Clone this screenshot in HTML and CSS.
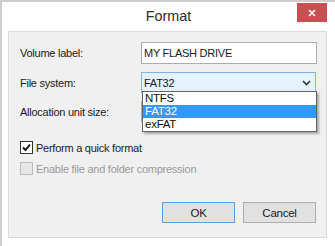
FILE: index.html
```html
<!DOCTYPE html>
<html>
<head>
<meta charset="utf-8">
<link rel="stylesheet" href="styles.css">
</head>
<body>
<div class="window">
  <div class="titlebar">
    <span class="spacer"></span>
    <span class="title">Format</span>
    <div class="close">
      <svg width="8" height="8" viewBox="0 0 8 8"><path d="M1 1 L7 7 M7 1 L1 7" stroke="#fff" stroke-width="1.6" fill="none"/></svg>
    </div>
  </div>
  <div class="panel">
    <div class="form">
      <div class="label">Volume label:</div>
      <div class="input">MY FLASH DRIVE</div>
      <div class="label">File system:</div>
      <div class="combo">
        <span>FAT32</span>
        <svg class="chev" width="9" height="6" viewBox="0 0 9 6"><path d="M1 1 L4.5 4.5 L8 1" stroke="#333" stroke-width="1.6" fill="none"/></svg>
        <ul class="list">
          <li>NTFS</li>
          <li class="sel">FAT32</li>
          <li>exFAT</li>
        </ul>
      </div>
      <div class="label">Allocation unit size:</div>
      <div class="combo plain"></div>
    </div>
    <div class="checks">
      <div class="check">
        <span class="box"><svg width="11" height="11" viewBox="0 0 11 11"><path d="M2 5.5 L4.5 8 L9 2.5" stroke="#111" stroke-width="1.9" fill="none"/></svg></span>
        <span>Perform a quick format</span>
      </div>
      <div class="check disabled">
        <span class="box"></span>
        <span>Enable file and folder compression</span>
      </div>
    </div>
    <div class="buttons">
      <div class="btn default">OK</div>
      <div class="btn">Cancel</div>
    </div>
  </div>
</div>
</body>
</html>
```
FILE: styles.css
```css
html, body {
  margin: 0;
  padding: 0;
  background: #ffffff;
}
body {
  width: 335px;
  height: 246px;
  overflow: hidden;
  font-family: "Liberation Sans", Arial, sans-serif;
  font-size: 11px;
  letter-spacing: -0.25px;
  color: #1a1a1a;
}
.window {
  box-sizing: border-box;
  height: 246px;
  border-top: 2px solid #cdcdcd;
  border-left: 2px solid #cdcdcd;
  background: #ffffff;
}
.titlebar {
  height: 29px;
  display: grid;
  grid-template-columns: 1fr auto 1fr;
  align-items: start;
}
.title {
  line-height: 29px;
  font-size: 14.3px;
  letter-spacing: 0;
  color: #2b2b2b;
}
.close {
  justify-self: end;
  margin-top: 1px;
  margin-right: 8px;
  width: 30px;
  height: 19px;
  background: #c75050;
  display: flex;
  align-items: center;
  justify-content: center;
}
.panel {
  box-sizing: border-box;
  margin-left: 6px;
  width: 319px;
  height: 207px;
  border: 1px solid #dadada;
  background: #f0f0f0;
  padding: 10px 9px 0 11px;
}
.form {
  display: grid;
  grid-template-columns: 121px 176px;
  grid-template-rows: 22px 21px 21px;
  row-gap: 8px;
  align-items: center;
}
.label {
  line-height: 14px;
}
.input {
  box-sizing: border-box;
  height: 22px;
  border: 1px solid #acacac;
  background: #ffffff;
  padding-left: 2px;
  display: flex;
  align-items: center;
}
.combo {
  position: relative;
  box-sizing: border-box;
  width: 175px;
  height: 21px;
  border: 1px solid #7eb4ea;
  background: #e5f1fb;
  padding-left: 2px;
  display: flex;
  align-items: center;
}
.combo.plain {
  border-color: #acacac;
  background: #e5e5e5;
}
.chev {
  margin-left: auto;
  margin-right: 4px;
}
.list {
  position: absolute;
  top: 100%;
  left: 0;
  width: 175px;
  box-sizing: border-box;
  margin: -1px 0 0 0;
  padding: 0;
  list-style: none;
  background: #ffffff;
  border: 1px solid #646464;
  box-shadow: 2px 2px 2px rgba(0, 0, 0, 0.3);
  z-index: 5;
}
.list li {
  height: 13px;
  line-height: 13px;
  padding-left: 2px;
  font-size: 11.5px;
  color: #111;
}
.list li.sel {
  background: #3399ff;
  color: #ffffff;
}
.checks {
  margin-top: 19px;
  display: flex;
  flex-direction: column;
  gap: 8px;
}
.check {
  display: flex;
  align-items: center;
  height: 13px;
  gap: 3px;
}
.box {
  box-sizing: border-box;
  width: 13px;
  height: 13px;
  border: 1px solid #333333;
  background: #ffffff;
  display: flex;
  align-items: center;
  justify-content: center;
}
.check.disabled {
  color: #9a9a9a;
}
.check.disabled .box {
  border-color: #bcbcbc;
  background: #e6e6e6;
}
.buttons {
  margin-top: 27px;
  display: flex;
  justify-content: flex-end;
  gap: 8px;
  padding-right: 1px;
}
.btn {
  box-sizing: border-box;
  width: 73px;
  height: 21px;
  border: 1px solid #adadad;
  background: #e1e1e1;
  display: flex;
  align-items: center;
  justify-content: center;
  font-size: 11.5px;
}
.btn.default {
  border-color: #5b9ee0;
}
```
